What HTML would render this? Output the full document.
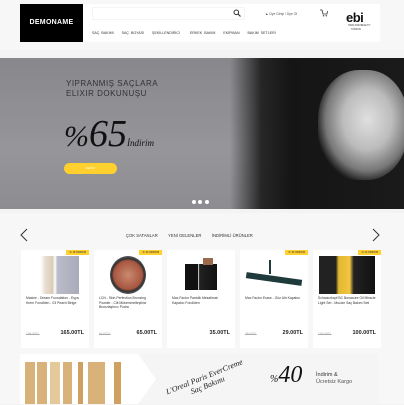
<!DOCTYPE html>
<html><head><meta charset="utf-8"><style>
*{margin:0;padding:0;box-sizing:border-box}
body{width:404px;height:404px;overflow:hidden;background:#f3f3f3;font-family:"Liberation Sans",sans-serif;position:relative}
.a{position:absolute}
.card{position:absolute;top:250px;width:68px;height:98px;background:#fff}
.card .t{position:absolute;left:5px;top:46px;font-size:3.4px;line-height:4.6px;color:#333;width:58px}
.card .o{position:absolute;left:5px;top:82px;font-size:3.2px;color:#aaa;text-decoration:line-through}
.card .p{position:absolute;right:5px;top:80px;font-size:5.5px;font-weight:bold;color:#222}
.card .b{position:absolute;right:0;top:0;background:#ffd02e;font-size:2.6px;padding:1px 3px;color:#333}
.card .img{position:absolute;left:10px;top:6px;width:48px;height:38px}
</style></head><body>
<div class="a" style="left:0;top:0;width:404px;height:50px;background:#f7f7f7"></div>
<div class="a" style="left:20px;top:4px;width:360px;height:38px;background:#fff"></div>
<div class="a" style="left:20px;top:4px;width:63px;height:38px;background:#000;color:#fff;font-weight:bold;font-size:7px;line-height:38px;text-align:center;letter-spacing:.3px">DEMONAME</div>
<div class="a" style="left:92px;top:7px;width:153px;height:13px;border:1px solid #f4f4f4"></div>
<svg class="a" style="left:233px;top:9px" width="8" height="8" viewBox="0 0 8 8"><circle cx="3.3" cy="3.3" r="2.3" fill="none" stroke="#333" stroke-width="1"/><path d="M5 5L7.5 7.5" stroke="#333" stroke-width="1.2"/></svg>
<div class="a" style="left:92px;top:31px;font-size:3.6px;color:#333;word-spacing:1px;white-space:nowrap">SAÇ BAKIMI &nbsp;&nbsp; SAÇ BOYASI &nbsp;&nbsp; ŞEKİLLENDİRİCİ &nbsp;&nbsp;&nbsp; ERKEK BAKIM &nbsp;&nbsp; EKİPMAN &nbsp;&nbsp; BAKIM SETLERİ</div>
<div class="a" style="left:265px;top:12px;font-size:3.4px;color:#555">▲ Üye Girişi / Üye Ol</div>
<svg class="a" style="left:320px;top:9px" width="8" height="8" viewBox="0 0 8 8"><path d="M0 1H2L3 5H7L7.5 2" fill="none" stroke="#333" stroke-width=".8"/><circle cx="3.5" cy="6.8" r=".7" fill="#333"/><circle cx="6.3" cy="6.8" r=".7" fill="#333"/></svg>
<div class="a" style="left:346px;top:11px;font-size:13px;font-weight:bold;color:#111;letter-spacing:-.5px;line-height:13px">ebi</div>
<div class="a" style="left:348px;top:24px;font-size:2.5px;color:#333">HAIR AND BEAUTY</div>
<div class="a" style="left:351px;top:29px;font-size:2.3px;color:#333">TÜRKİYE</div>
<div class="a" style="left:0;top:58px;width:404px;height:151px;background:linear-gradient(180deg,#88888c 0%,#96969a 60%,#8d8d91 100%)"></div>
<div class="a" style="left:230px;top:58px;width:174px;height:151px;background:linear-gradient(90deg,rgba(20,20,20,0) 0%,rgba(20,20,20,.85) 18%,#151515 35%,#1a1a1a 100%)"></div>
<div class="a" style="left:318px;top:70px;width:90px;height:110px;border-radius:45%;background:radial-gradient(ellipse at 55% 45%,#e0e0e0 0%,#bcbcbc 35%,#777 60%,rgba(30,30,30,0) 75%)"></div>
<div class="a" style="left:66px;top:79px;font-size:8px;color:#333;line-height:10px;letter-spacing:.5px">YIPRANMIŞ SAÇLARA<br>ELIXIR DOKUNUŞU</div>
<div class="a" style="left:64px;top:112px;font-family:'Liberation Serif',serif;font-style:italic;font-size:30px;color:#111">%<span style="font-size:38px">65</span><span style="font-size:9px">İndirim</span></div>
<div class="a" style="left:64px;top:163px;width:53px;height:11px;background:#ffd02e;border-radius:6px;font-size:3px;color:#fff;text-align:center;line-height:11px">DETAY</div>
<div class="a" style="left:192px;top:200px;width:4px;height:4px;border-radius:50%;background:#fff"></div>
<div class="a" style="left:198px;top:200px;width:4px;height:4px;border-radius:50%;background:#fff"></div>
<div class="a" style="left:205px;top:200px;width:4px;height:4px;border-radius:50%;background:#fff"></div>
<div class="a" style="left:0;top:213px;width:404px;height:191px;background:#f7f7f7"></div>
<svg class="a" style="left:20px;top:228px" width="8" height="14"><path d="M7 1L1 7L7 13" fill="none" stroke="#333" stroke-width="1"/></svg>
<svg class="a" style="left:372px;top:228px" width="8" height="14"><path d="M1 1L7 7L1 13" fill="none" stroke="#333" stroke-width="1"/></svg>
<div class="a" style="left:126px;top:233px;font-size:4.2px;color:#333;white-space:nowrap">ÇOK SATANLAR &nbsp;&nbsp;&nbsp;&nbsp;&nbsp;&nbsp;&nbsp; YENİ GELENLER &nbsp;&nbsp;&nbsp;&nbsp;&nbsp;&nbsp;&nbsp; İNDİRİMLİ ÜRÜNLER</div>
<div class="card" style="left:21px"><div class="b">% 18 İNDİRİM</div><div class="img" style="background:linear-gradient(90deg,#fff 20%,#e8ddd0 30%,#d9ccb8 45%,#fff 50%,#b9bcc8 55%,#aab 100%)"></div><div class="t">Maxine - Dream Foundation - Eşya Krem Fondöten - 03 Peach Beige</div><div class="o">195.00TL</div><div class="p">165.00TL</div></div>
<div class="card" style="left:94px"><div class="b">% 30 İNDİRİM</div><div class="img" style="left:16px;width:36px;border-radius:50%;background:radial-gradient(circle,#c98a6f 0%,#a8553f 55%,#333 62%,#555 72%,#fff 74%)"></div><div class="t">LCN - Skin Perfection Bronzing Powder - Cilt Mükemmelleştirici Bronzlaştırıcı Pudra</div><div class="o">94.00TL</div><div class="p">65.00TL</div></div>
<div class="card" style="left:167px"><div class="img" style="left:18px;top:14px;width:32px;height:26px;background:linear-gradient(90deg,#111 40%,#fff 42%,#222 45%,#111 100%)"></div><div class="a" style="left:36px;top:8px;width:10px;height:7px;background:#9a6a4a"></div><div class="t">Max Factor Panstik Mesafimat Kapatıcı Fondöten</div><div class="p">35.00TL</div></div>
<div class="card" style="left:240px"><div class="b">% 35 İNDİRİM</div><div class="a" style="left:6px;top:26px;width:56px;height:6px;background:#1f3a3a;transform:rotate(8deg)"></div><div class="a" style="left:29px;top:10px;width:2px;height:14px;background:#1f3a3a"></div><div class="t">Max Factor Erase - Göz Altı Kapatıcı</div><div class="o">45.00TL</div><div class="p">29.00TL</div></div>
<div class="card" style="left:313px"><div class="b">% 23 İNDİRİM</div><div class="img" style="left:6px;width:56px;background:linear-gradient(90deg,#222 0%,#222 30%,#e2b830 35%,#f1c540 55%,#222 62%,#111 100%)"></div><div class="t">Schwarzkopf BC Bonacure Oil Miracle Light Set - Mucize Saç Bakım Seti</div><div class="o">130.00TL</div><div class="p">100.00TL</div></div>
<div class="a" style="left:20px;top:354px;width:358px;height:50px;background:#fff"></div>
<div class="a" style="left:138px;top:354px;width:240px;height:50px;background:#f5f5f5;clip-path:polygon(0 0,100% 0,100% 100%,0 100%,18px 50%)"></div>
<div class="a" style="left:25px;top:362px;width:100px;height:42px;background:linear-gradient(90deg,#d9b279 0 10%,#fff 10% 12%,#d9b279 12% 22%,#fff 22% 25%,#e4c99a 25% 35%,#fff 35% 38%,#d9b279 38% 47%,#fff 47% 53%,#cfa060 53% 58%,#fff 58% 63%,#d9b279 63% 80%,#fff 80% 89%,#cfa060 89% 96%,#fff 96%)"></div>
<div class="a" style="left:165px;top:372px;font-family:'Liberation Serif',serif;font-style:italic;font-size:8px;color:#222;transform:rotate(-22deg);line-height:9px;text-align:center">L'Oreal Paris EverCreme<br>Saç Bakımı</div>
<div class="a" style="left:270px;top:362px;font-family:'Liberation Serif',serif;font-style:italic;font-size:24px;color:#111"><span style="font-size:10px">%</span>40</div>
<div class="a" style="left:316px;top:372px;font-size:5.5px;color:#333;line-height:7px">İndirim &amp;<br><span style="color:#555">Ücretsiz Kargo</span></div>
</body></html>
